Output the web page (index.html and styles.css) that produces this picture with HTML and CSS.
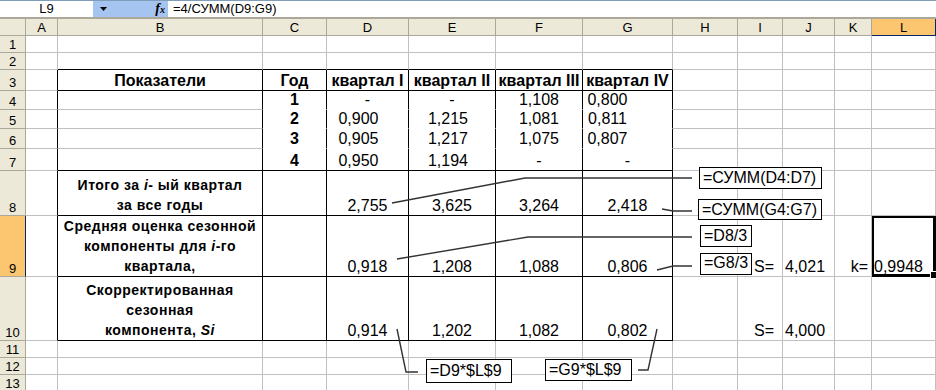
FILE: index.html
```html
<!DOCTYPE html>
<html lang="ru">
<head>
  <meta charset="UTF-8">
  <title>Сезонная компонента</title>
  <link rel="stylesheet" href="styles.css">
</head>
<body>
  <div class="app">
    <div class="fbar">
      <div class="namebox">L9</div>
      <div class="fbtns">
        <svg width="7" height="4" viewBox="0 0 7 4"><path d="M0 0h7L3.5 4z" fill="#000"/></svg>
        <span class="fx">f<small>x</small></span>
      </div>
      <div class="finput">=4/СУММ(D9:G9)</div>
    </div>

    <div class="sheet">
      <!-- column headers -->
      <div class="corner"></div>
      <div class="ch">A</div><div class="ch">B</div><div class="ch">C</div><div class="ch">D</div>
      <div class="ch">E</div><div class="ch">F</div><div class="ch">G</div><div class="ch">H</div>
      <div class="ch">I</div><div class="ch">J</div><div class="ch">K</div><div class="ch sel">L</div>

      <!-- 1 -->
      <div class="rh">1</div>
      <div></div><div></div><div></div><div></div><div></div><div></div>
      <div></div><div></div><div></div><div></div><div></div><div></div>

      <!-- 2 -->
      <div class="rh">2</div>
      <div></div>
      <div class="b"></div><div class="b"></div><div class="b"></div><div class="b"></div><div class="b"></div><div class="b"></div>
      <div></div><div></div><div></div><div></div><div></div>

      <!-- 3 -->
      <div class="rh">3</div>
      <div class="r"></div>
      <div class="r b hd">Показатели</div>
      <div class="r b hd">Год</div>
      <div class="r b hd">квартал I</div>
      <div class="r b hd">квартал II</div>
      <div class="r b hd">квартал III</div>
      <div class="r b hd">квартал IV</div>
      <div></div><div></div><div></div><div></div><div></div>

      <!-- 4 -->
      <div class="rh">4</div>
      <div class="r"></div><div class="r"></div>
      <div class="w r hd">1</div>
      <div class="w r">-</div>
      <div class="w r">-</div>
      <div class="w r">1,108</div>
      <div class="w r sg">0,800</div>
      <div></div><div></div><div></div><div></div><div></div>

      <!-- 5 -->
      <div class="rh">5</div>
      <div class="r"></div><div class="r"></div>
      <div class="w r hd">2</div>
      <div class="w r sd">0,900</div>
      <div class="w r se">1,215</div>
      <div class="w r">1,081</div>
      <div class="w r sg">0,811</div>
      <div></div><div></div><div></div><div></div><div></div>

      <!-- 6 -->
      <div class="rh">6</div>
      <div class="r"></div><div class="r"></div>
      <div class="w r hd">3</div>
      <div class="w r sd">0,905</div>
      <div class="w r se">1,217</div>
      <div class="w r">1,075</div>
      <div class="w r sg">0,807</div>
      <div></div><div></div><div></div><div></div><div></div>

      <!-- 7 -->
      <div class="rh">7</div>
      <div class="r"></div><div class="r b"></div>
      <div class="r b hd">4</div>
      <div class="r b sd">0,950</div>
      <div class="r b se">1,194</div>
      <div class="r b">-</div>
      <div class="r b">-</div>
      <div></div><div></div><div></div><div></div><div></div>

      <!-- 8 -->
      <div class="rh">8</div>
      <div class="r"></div>
      <div class="r b lbl"><span>Итого за <i>i</i>- ый квартал<br>за все годы</span></div>
      <div class="r b"></div>
      <div class="r b">2,755</div>
      <div class="r b">3,625</div>
      <div class="r b">3,264</div>
      <div class="r b">2,418</div>
      <div></div><div></div><div></div><div></div><div></div>

      <!-- 9 -->
      <div class="rh sel">9</div>
      <div class="r"></div>
      <div class="r b lbl"><span>Средняя оценка сезонной<br>компоненты для <i>i</i>-го<br>квартала,</span></div>
      <div class="r b"></div>
      <div class="r b">0,918</div>
      <div class="r b">1,208</div>
      <div class="r b">1,088</div>
      <div class="r b">0,806</div>
      <div></div>
      <div class="rt pr">S=</div>
      <div class="lt">4,021</div>
      <div class="rt">k=</div>
      <div class="lt active">0,9948</div>

      <!-- 10 -->
      <div class="rh">10</div>
      <div class="r"></div>
      <div class="r b lbl"><span>Скорректированная<br>сезонная<br>компонента, <i>Si</i></span></div>
      <div class="r b"></div>
      <div class="r b">0,914</div>
      <div class="r b">1,202</div>
      <div class="r b">1,082</div>
      <div class="r b">0,802</div>
      <div></div>
      <div class="rt pr">S=</div>
      <div class="lt">4,000</div>
      <div></div><div></div>

      <!-- 11 -->
      <div class="rh">11</div>
      <div></div><div></div><div></div><div></div><div></div><div></div>
      <div></div><div></div><div></div><div></div><div></div><div></div>

      <!-- 12 -->
      <div class="rh">12</div>
      <div></div><div></div><div></div><div></div><div></div><div></div>
      <div></div><div></div><div></div><div></div><div></div><div></div>

      <!-- 13 -->
      <div class="rh">13</div>
      <div></div><div></div><div></div><div></div><div></div><div></div>
      <div></div><div></div><div></div><div></div><div></div><div></div>
    </div>

    <!-- drawing layer: leader lines and formula notes -->
    <svg class="leaders" width="936" height="390">
      <polyline points="392,203 525,178 692,178"/>
      <polyline points="662,209 673,211 692,211"/>
      <polyline points="397,259 528,237 692,237"/>
      <polyline points="657,270 673,266 692,266"/>
      <polyline points="397,329 406,372 418,372"/>
      <polyline points="657,329 648,370 638,370"/>
    </svg>
    <div class="note n1">=СУММ(D4:D7)</div>
    <div class="note n2">=СУММ(G4:G7)</div>
    <div class="note n3">=D8/3</div>
    <div class="note n4">=G8/3</div>
    <div class="note n5">=D9*$L$9</div>
    <div class="note n6">=G9*$L$9</div>
  </div>
</body>
</html>
```

FILE: styles.css
```css
* {
  box-sizing: border-box;
}
body {
  margin: 0;
  font-family: "Liberation Sans", Arial, sans-serif;
  background: #fff;
  color: #000;
  overflow: hidden;
}
.app {
  position: relative;
  width: 936px;
  height: 390px;
  overflow: hidden;
}

/* formula bar */
.fbar {
  display: flex;
  height: 19px;
  border-top: 1px solid #7f9db9;
  border-bottom: 2px solid #aca899;
  font-size: 13px;
  line-height: 16px;
}
.namebox {
  width: 93px;
  text-align: center;
}
.fbtns {
  width: 75px;
  background: #a6c4f0;
  display: flex;
  align-items: center;
  justify-content: space-between;
  padding: 0 3px 0 7px;
}
.fx {
  font-family: "Liberation Serif", serif;
  font-style: italic;
  font-weight: bold;
  font-size: 14px;
}
.fx small {
  font-size: 10px;
}
.finput {
  flex: 1;
  padding-left: 5px;
}

/* grid */
.sheet {
  display: grid;
  grid-template-columns: 26px 32px 205px 64px 82px 87px 87px 90px 65px 45px 52px 37px 64px;
  grid-template-rows: 17px 17px 17px 21px 19px 19px 20px 22px 45px 61px 64px 17px 17px 17px;
  font-size: 16px;
}
.sheet > div {
  display: flex;
  align-items: flex-end;
  justify-content: center;
  white-space: nowrap;
  line-height: 18px;
  border-right: 1px solid #c0c0c0;
  border-bottom: 1px solid #c0c0c0;
}
.sheet > .corner,
.sheet > .ch,
.sheet > .rh {
  background: #ece9d8;
  border-color: #aca899;
  font-size: 13px;
  line-height: 15px;
}
.sheet > .ch {
  align-items: center;
}
.sheet > .sel {
  background: #fcc56f;
}
.sheet > .ch.sel {
  border-bottom-color: #0a246a;
  border-right-color: #0a246a;
}
.sheet > .rh.sel {
  border-right-color: #0a246a;
}

.sheet > .w {
  border-color: #fff;
}
.sheet > .r {
  border-right-color: #000;
}
.sheet > .b {
  border-bottom-color: #000;
}
.hd {
  font-weight: bold;
}
.lbl {
  font-size: 14px;
  font-weight: bold;
  letter-spacing: 0.5px;
  line-height: 20px;
  text-align: center;
}
.sheet > .lbl {
  line-height: 20px;
}
.sheet > .lt {
  justify-content: flex-start;
  padding-left: 2px;
}
.sheet > .rt {
  justify-content: flex-end;
  padding-right: 3px;
}
.sheet > .pr {
  padding-right: 8px;
}

/* rows 4-7 values sit off-centre */
.sheet > .sd {
  padding-right: 18px;
}
.sheet > .se {
  padding-right: 8px;
}
.sheet > .sg {
  padding-right: 40px;
}

.sheet > .active {
  position: relative;
  border-color: #000;
  box-shadow: inset 0 0 0 2px #000;
}
.active::after {
  content: "";
  position: absolute;
  right: -3px;
  bottom: -3px;
  width: 6px;
  height: 6px;
  background: #000;
  border: 1px solid #fff;
}

/* drawing layer */
.leaders {
  position: absolute;
  top: 0;
  left: 0;
  pointer-events: none;
}
.leaders polyline {
  fill: none;
  stroke: #333;
  stroke-width: 1.4;
}
.note {
  position: absolute;
  background: #fff;
  border: 1px solid #000;
  font-size: 16px;
  padding-left: 3px;
  white-space: nowrap;
}
.n1 { left: 699px; top: 167px; width: 123px; height: 22px; line-height: 20px; }
.n2 { left: 698px; top: 199px; width: 124px; height: 21px; line-height: 19px; }
.n3 { left: 700px; top: 225px; width: 52px; height: 22px; line-height: 20px; }
.n4 { left: 700px; top: 253px; width: 52px; height: 22px; line-height: 18px; }
.n5 { left: 426px; top: 359px; width: 86px; height: 24px; line-height: 22px; }
.n6 { left: 545px; top: 359px; width: 87px; height: 22px; line-height: 20px; }
```
